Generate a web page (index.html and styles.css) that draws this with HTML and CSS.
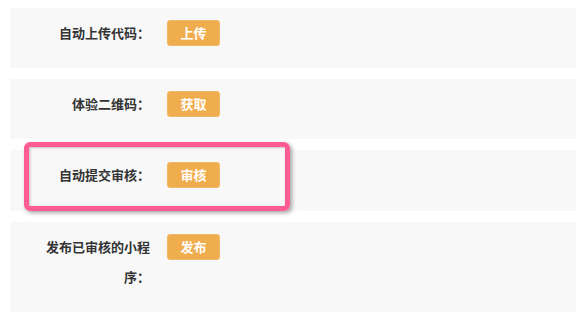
FILE: index.html
```html
<!DOCTYPE html>
<html lang="zh">
<head>
<meta charset="utf-8">
<link rel="stylesheet" href="styles.css">
</head>
<body>
<div class="page">
  <div class="row">
    <div class="label">自动上传代码：</div>
    <div class="field"><button class="btn">上传</button></div>
  </div>
  <div class="row">
    <div class="label">体验二维码：</div>
    <div class="field"><button class="btn">获取</button></div>
  </div>
  <div class="row">
    <div class="label">自动提交审核：</div>
    <div class="field"><button class="btn">审核</button></div>
    <div class="highlight"></div>
  </div>
  <div class="row">
    <div class="label">发布已审核的小程序：</div>
    <div class="field"><button class="btn">发布</button></div>
  </div>
</div>
</body>
</html>
```
FILE: styles.css
```css
html, body {
  margin: 0;
  padding: 0;
  background: #ffffff;
}
body {
  font-family: "Noto Sans CJK SC", "Noto Sans", sans-serif;
  overflow: hidden;
}
.page {
  display: flex;
  flex-direction: column;
  gap: 11px;
  padding: 8px 0 0 10px;
}
.row {
  position: relative;
  display: flex;
  align-items: flex-start;
  background: #f8f8f8;
  padding: 10px 0 20px 0;
  min-height: 30px;
}
.row:nth-child(3) {
  padding-top: 10px;
  padding-bottom: 21px;
}
.label {
  width: 106px;
  margin-left: 34px;
  text-align: right;
  font-size: 13px;
  font-weight: bold;
  line-height: 30px;
  color: #333333;
}
.field {
  margin-left: 17px;
  height: 30px;
  display: flex;
  align-items: center;
}
.btn {
  width: 53px;
  height: 26px;
  padding: 0;
  border: 1px solid #f2b766;
  border-radius: 3px;
  background: #f0ad4e;
  color: #ffffff;
  font-family: "Noto Sans CJK SC", "Noto Sans", sans-serif;
  font-size: 13px;
  font-weight: bold;
  line-height: 24px;
}
.highlight {
  position: absolute;
  left: 14px;
  top: -8px;
  width: 256px;
  height: 59px;
  border: 5px solid #ff5c93;
  border-radius: 6px;
  box-shadow: 2px 2px 4px rgba(0, 0, 0, 0.35), inset 1px 1px 3px rgba(0, 0, 0, 0.25);
  pointer-events: none;
}
```
